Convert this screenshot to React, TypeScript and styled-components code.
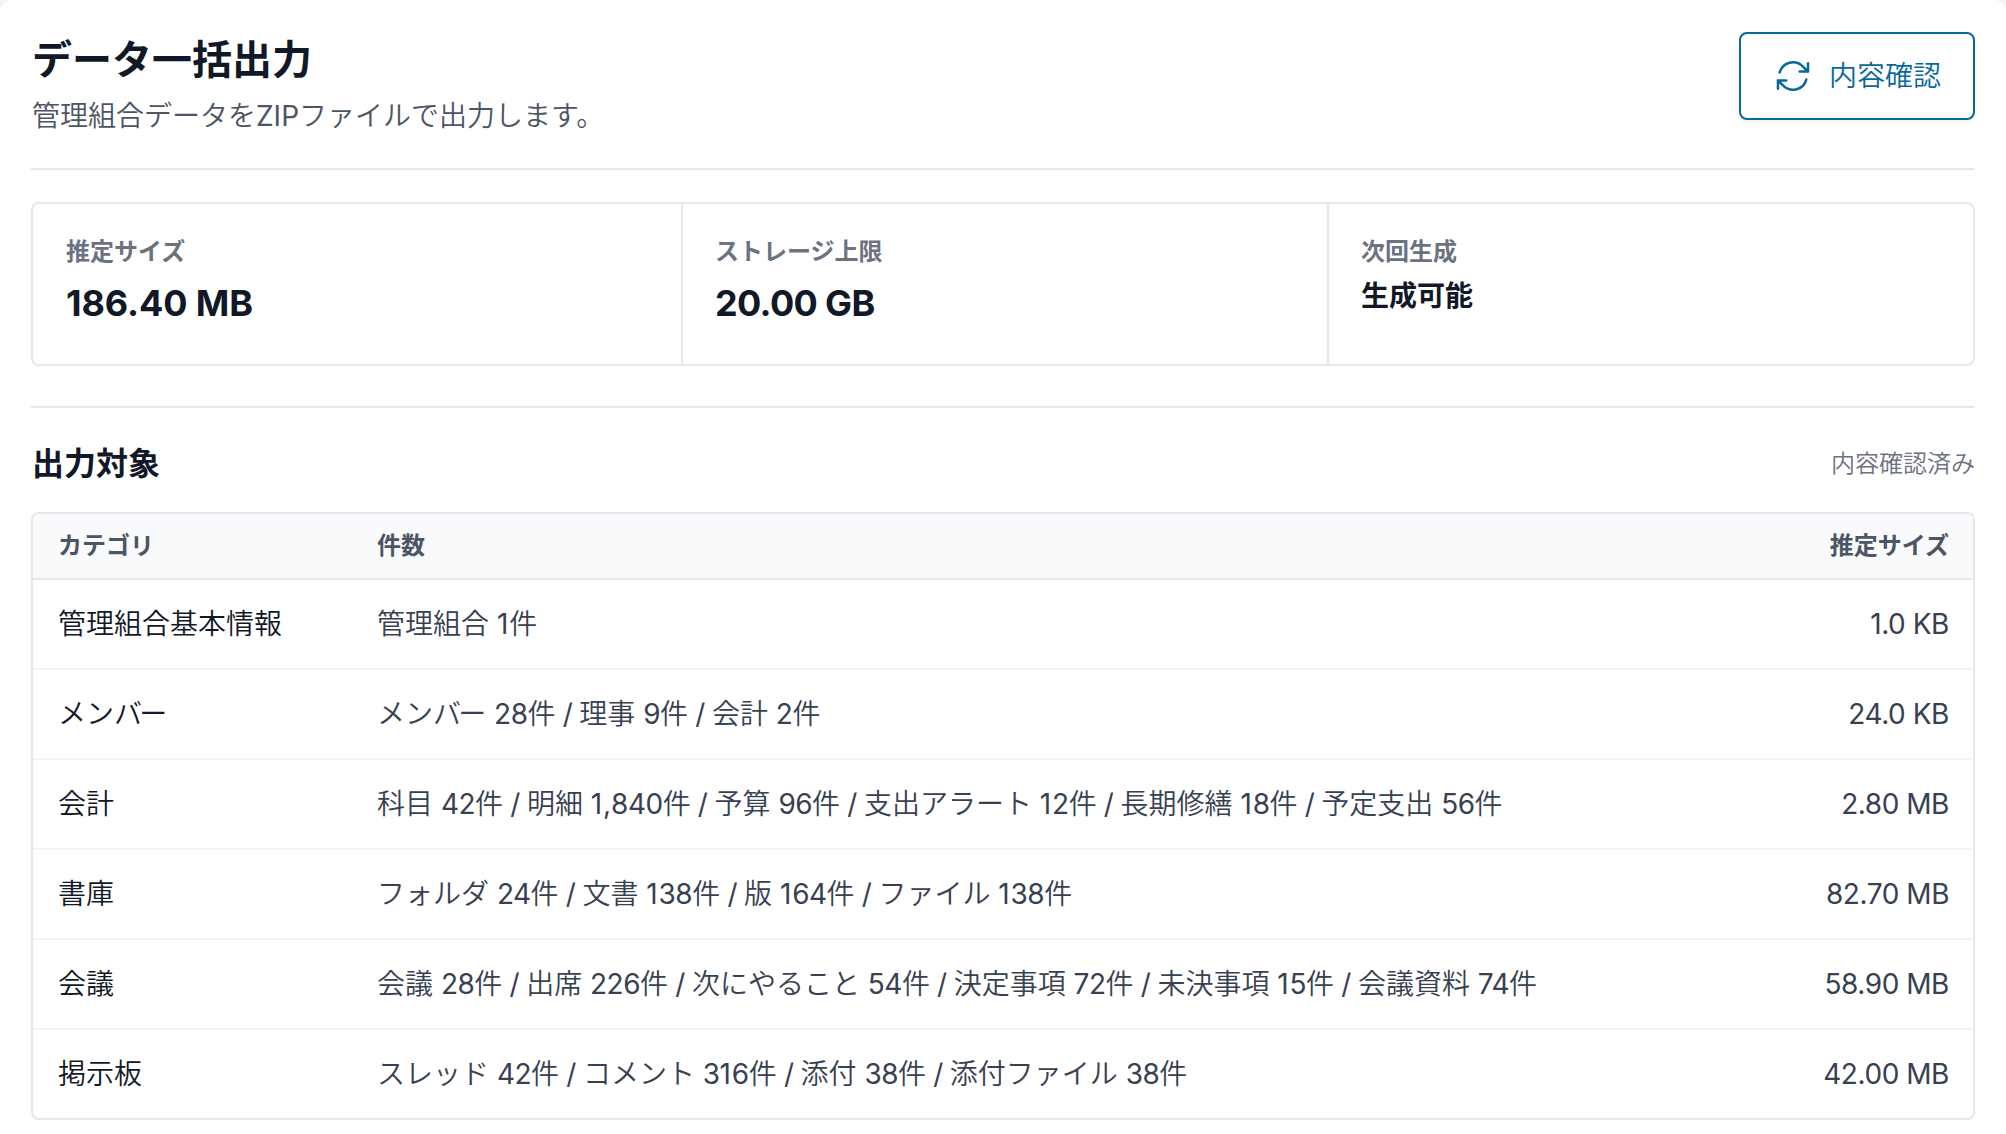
import React from "react";
import styled, { createGlobalStyle } from "styled-components";

const regular = `Inter, "Noto Sans CJK JP DemiLight", "Noto Sans CJK JP", sans-serif`;
const strong = `Inter, "Noto Sans CJK JP", sans-serif`;

const GlobalStyle = createGlobalStyle`
  * { box-sizing: border-box; }
  body {
    margin: 0;
    background: #f3f4f6;
    color: #111827;
    font-family: ${regular};
    -webkit-font-smoothing: antialiased;
  }
`;

const Panel = styled.main`
  width: 2006px;
  height: 1134px;
  overflow: hidden;
  padding: 32px 31px 0;
  background: #ffffff;
  border-radius: 12px 12px 0 0;
`;

const Header = styled.header`
  display: flex;
  justify-content: space-between;
  align-items: flex-start;
  height: 138px;
  border-bottom: 2px solid #e5e7eb;
`;

const HeaderText = styled.div`
  padding-left: 1px;
`;

const Title = styled.h1`
  margin: 0 0 8px;
  font-family: ${strong};
  font-size: 40px;
  line-height: 56px;
  font-weight: 600;
`;

const Description = styled.p`
  margin: 0;
  font-size: 28px;
  line-height: 40px;
  color: #4b5563;
`;

const CheckButton = styled.button`
  display: flex;
  align-items: center;
  gap: 16px;
  height: 88px;
  padding: 0 32px;
  border: 2px solid #07699b;
  border-radius: 8px;
  background: #ffffff;
  color: #07699b;
  font: inherit;
  font-size: 28px;
  line-height: 40px;
  box-shadow: 0 2px 4px rgba(0, 0, 0, 0.05);

  svg {
    width: 40px;
    height: 40px;
  }
`;

const Stats = styled.dl`
  display: grid;
  grid-template-columns: 648px 646px 1fr;
  height: 164px;
  margin: 32px 0 40px;
  border: 2px solid #e5e7eb;
  border-radius: 8px;
`;

const Stat = styled.div`
  padding: 32px 32px 32px 33px;

  & + & {
    padding-left: 32px;
    border-left: 2px solid #e5e7eb;
  }
`;

const StatLabel = styled.dt`
  font-family: ${strong};
  font-size: 24px;
  line-height: 32px;
  font-weight: 600;
  color: #6b7280;
`;

const StatValue = styled.dd<{ $small?: boolean; $tracking?: number }>`
  margin: ${(p) => (p.$small ? 8 : 7)}px 0 0;
  font-family: ${strong};
  font-size: ${(p) => (p.$small ? 28 : 36)}px;
  line-height: ${(p) => (p.$small ? 40 : 56)}px;
  font-weight: ${(p) => (p.$small ? 600 : 700)};
  letter-spacing: ${(p) => p.$tracking ?? 0}px;
`;

const Section = styled.section`
  padding-top: 32px;
  border-top: 2px solid #e5e7eb;
`;

const SectionHeader = styled.div`
  display: flex;
  align-items: center;
  justify-content: space-between;
  height: 48px;
  margin-bottom: 24px;
  padding-left: 1px;
`;

const SectionTitle = styled.h2`
  margin: 0;
  font-family: ${strong};
  font-size: 32px;
  line-height: 48px;
  font-weight: 600;
`;

const Status = styled.span`
  font-size: 24px;
  line-height: 32px;
  color: #6b7280;
`;

const Table = styled.div`
  border: 2px solid #e5e7eb;
  border-radius: 8px;
  overflow: hidden;
`;

const Row = styled.div`
  display: grid;
  grid-template-columns: 319px 1fr 260px;
  align-items: center;
  height: 90px;
  padding: 0 24px 0 25px;
  border-bottom: 2px solid #f3f4f6;
  font-size: 28px;
  line-height: 40px;
  color: #374151;

  &:last-child {
    height: 88px;
    border-bottom: 0;
  }
`;

const HeadRow = styled(Row)`
  height: 66px;
  background: #f9fafb;
  border-bottom-color: #e5e7eb;
  font-family: ${strong};
  font-size: 24px;
  line-height: 32px;
  font-weight: 600;
  color: #4b5563;
`;

const Category = styled.span`
  color: #111827;
`;

const Count = styled.span`
  white-space: pre;
`;

const Tracked = styled.span<{ $em: number }>`
  letter-spacing: ${(p) => p.$em}em;
`;

const HeadSize = styled.span`
  text-align: right;
`;

const Size = styled(HeadSize)`
  letter-spacing: -0.016em;
`;

const rows = [
  ["管理組合基本情報", "管理組合 1件", "1.0 KB"],
  ["メンバー", "メンバー 28件 / 理事 9件 / 会計 2件", "24.0 KB"],
  ["会計", "科目 42件 / 明細 1,840件 / 予算 96件 / 支出アラート 12件 / 長期修繕 18件 / 予定支出 56件", "2.80 MB"],
  ["書庫", "フォルダ 24件 / 文書 138件 / 版 164件 / ファイル 138件", "82.70 MB"],
  ["会議", "会議 28件 / 出席 226件 / 次にやること 54件 / 決定事項 72件 / 未決事項 15件 / 会議資料 74件", "58.90 MB"],
  ["掲示板", "スレッド 42件 / コメント 316件 / 添付 38件 / 添付ファイル 38件", "42.00 MB"],
];

// Evens out the optical spacing of digits, separators and the バー pair.
const tracking = (token: string): number | null => {
  if (token === " / ") return -0.024;
  if (token === "1") return 0.03;
  if (token === "バ") return -0.1;
  if (/^[02-9]+$/.test(token)) return -0.018;
  return null;
};

const Spaced = ({ text }: { text: string }) => (
  <>
    {text
      .split(/( \/ |1|[02-9]+|バ)/)
      .filter(Boolean)
      .map((token, i) => {
        const em = tracking(token);
        return em === null ? (
          <React.Fragment key={i}>{token}</React.Fragment>
        ) : (
          <Tracked key={i} $em={em}>
            {token}
          </Tracked>
        );
      })}
  </>
);

const RefreshIcon = () => (
  <svg viewBox="0 0 24 24" fill="none" stroke="currentColor" strokeWidth="1.5" strokeLinecap="round" strokeLinejoin="round">
    <path d="M16.023 9.348h4.992v-.001M2.985 19.644v-4.992m0 0h4.992m-4.993 0 3.181 3.183a8.25 8.25 0 0 0 13.803-3.7M4.031 9.865a8.25 8.25 0 0 1 13.803-3.7l3.181 3.182m0-4.991v4.99" />
  </svg>
);

export default function App() {
  return (
    <>
      <GlobalStyle />
      <Panel lang="ja">
        <Header>
          <HeaderText>
            <Title>データ一括出力</Title>
            <Description>管理組合データをZIPファイルで出力します。</Description>
          </HeaderText>
          <CheckButton type="button">
            <RefreshIcon />
            内容確認
          </CheckButton>
        </Header>
        <Stats>
          <Stat>
            <StatLabel>推定サイズ</StatLabel>
            <StatValue $tracking={-0.1}>186.40 MB</StatValue>
          </Stat>
          <Stat>
            <StatLabel>ストレージ上限</StatLabel>
            <StatValue $tracking={-0.65}>20.00 GB</StatValue>
          </Stat>
          <Stat>
            <StatLabel>次回生成</StatLabel>
            <StatValue $small>生成可能</StatValue>
          </Stat>
        </Stats>
        <Section>
          <SectionHeader>
            <SectionTitle>出力対象</SectionTitle>
            <Status>内容確認済み</Status>
          </SectionHeader>
          <Table>
            <HeadRow>
              <span>カテゴリ</span>
              <span>件数</span>
              <HeadSize>推定サイズ</HeadSize>
            </HeadRow>
            {rows.map(([category, count, size]) => (
              <Row key={category}>
                <Category>
                  <Spaced text={category} />
                </Category>
                <Count>
                  <Spaced text={count} />
                </Count>
                <Size>{size}</Size>
              </Row>
            ))}
          </Table>
        </Section>
      </Panel>
    </>
  );
}
